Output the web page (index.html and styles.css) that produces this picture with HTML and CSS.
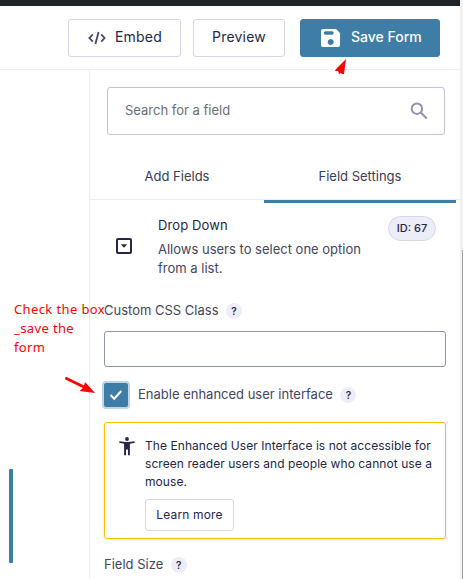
FILE: index.html
```
<!DOCTYPE html>
<html lang="en">
<head>
<meta charset="utf-8">
<title>Form Editor</title>
<link rel="stylesheet" href="styles.css">
</head>
<body>
<div class="app">
  <div class="adminbar"></div>
  <header class="toolbar">
    <button class="btn embed"><svg width="18" height="14" viewBox="0 0 18 14" fill="none" stroke="#454866" stroke-width="1.8"><path d="M4.8 3.3 1.4 7l3.4 3.7M13.2 3.3 16.6 7l-3.4 3.7M10.6 1 7.400 13"/></svg><span>Embed</span></button>
    <button class="btn preview"><span>Preview</span></button>
    <button class="btn save"><svg width="19" height="18" viewBox="0 0 19 18"><path fill="#fff" fill-rule="evenodd" d="M2 0h13l4 4v12a2 2 0 0 1-2 2H2a2 2 0 0 1-2-2V2a2 2 0 0 1 2-2zM4.500 2.200a1.800 1.800 0 0 0 0 3.600h6.500a1.800 1.800 0 0 0 0-3.600zM9.700 10a3 3 0 1 0 .01 0z"/></svg><span>Save Form</span></button>
  </header>
  <div class="workspace">
    <main class="canvas"><div class="selection"></div></main>
    <aside class="sidebar">
      <div class="search"><span>Search for a field</span><svg width="18" height="18" viewBox="0 0 18 18" fill="none" stroke="#9092b2" stroke-width="2"><circle cx="6.900" cy="6.700" r="5.200"/><path d="m10.700 10.500 6 6"/></svg></div>
      <nav class="tabs"><div class="tab"><span>Add Fields</span></div><div class="tab active"><span>Field Settings</span></div></nav>
      <section class="summary">
        <svg class="type" width="16" height="16" viewBox="0 0 16 16"><rect x="1" y="1" width="14" height="14" rx="1" fill="none" stroke="#242748" stroke-width="2"/><path d="M4.800 6.200h6.400L8 9.700z" fill="#242748"/></svg>
        <div class="about"><h2>Drop Down</h2><p>Allows users to select one option<br>from a list.</p></div>
        <span class="badge">ID: 67</span>
      </section>
      <div class="label css-label"><span>Custom CSS Class</span><i class="help">?</i></div>
      <div class="input"></div>
      <div class="label check-row"><div class="checkbox"><svg width="14" height="12" viewBox="0 0 14 12" fill="none" stroke="#fff" stroke-width="2"><path d="m1.500 6 3.700 3.700L12.300 2"/></svg></div><span>Enable enhanced user interface</span><i class="help">?</i></div>
      <div class="notice">
        <svg width="16" height="19" viewBox="0 0 16 19" fill="#242748"><circle cx="8" cy="2" r="1.900"/><path d="M.5 4.200C5 5.300 11 5.300 15.500 4.200l.4 1.500-5 1V18.300H9V12.500H7v5.800H5.100V6.700l-5-1z"/></svg>
        <div class="message"><p>The Enhanced User Interface is not accessible for<br>screen reader users and people who cannot use a<br>mouse.</p><button class="learn">Learn more</button></div>
      </div>
      <div class="label size-label"><span>Field Size</span><i class="help">?</i></div>
    </aside>
  </div>
</div>
<div class="scrollbar"><div class="thumb"></div></div>
<div class="note">Check the box<br>_save the<br>form</div>
<svg class="arrow arrow-check" width="32" height="20" viewBox="0 0 32 20"><path d="M2.500 2.500 20 11" stroke="#f00" stroke-width="3" stroke-linecap="round"/><path d="M21 6 31 17 15.500 15l4-3.500z" fill="#f00"/></svg>
<svg class="arrow arrow-save" width="14" height="16" viewBox="0 0 14 16"><path d="M12 0 10 15H8l-1-1-2 1-1-3H1l1-2z" fill="#f00"/></svg>
</body>
</html>
```

FILE: styles.css
```
* { box-sizing: border-box; }
body { margin: 0; height: 579px; overflow: hidden; display: flex; position: relative; background: #fff; color: #242748; font: 13px/20px Inter, "Liberation Sans", sans-serif; }
button { font: inherit; color: inherit; padding: 0; }
svg { flex: none; display: block; }
.app { width: 460px; height: 579px; display: flex; flex-direction: column; overflow: hidden; }
.adminbar { height: 6px; background: #1d2327; flex: none; }
.toolbar { height: 64px; flex: none; display: flex; align-items: flex-start; padding: 13px 0 0 68px; border-bottom: 1px solid #ecedf8; }
.btn { height: 38px; display: flex; align-items: center; border: 1px solid #d5d7e9; border-radius: 3px; background: #fff; font-size: 14px; font-weight: 400; letter-spacing: .2px; }
.btn span { padding-bottom: 2px; }
.embed { width: 113px; padding-left: 19px; gap: 9px; margin-right: 12px; }
.preview { width: 92px; padding-left: 18px; margin-right: 15px; }
.save { width: 140px; padding-left: 20px; gap: 11px; background: #3e7da6; border-color: #3e7da6; color: #fff; font-weight: 500; letter-spacing: 0; }
.workspace { display: flex; flex: 1; min-height: 0; }
.canvas { width: 89px; padding: 399px 0 0 9px; flex: none; }
.selection { width: 4px; height: 94px; border-radius: 1px; background: #3e7da6; }
.sidebar { width: 371px; border-left: 1px solid #ecedf8; overflow: hidden; }
.search { margin: 17px 0 0 17px; width: 338px; height: 48px; border: 1px solid #c1c3dd; border-radius: 3px; display: flex; align-items: center; justify-content: space-between; padding: 0 16px 0 17px; color: #686e77; }
.search span { padding-bottom: 2px; }
.tabs { height: 65px; display: flex; border-bottom: 1px solid #ecedf8; }
.tab { width: 174px; padding: 31px 0 0; text-align: center; color: #373b57; height: 68px; flex: none; }
.tab.active { width: 192px; border-bottom: 3px solid #3e7da6; }
.summary { height: 96px; display: flex; padding: 16px 0 0 26px; }
.type { margin: 22px 26px 0 0; }
.about { width: 230px; margin-top: -1px; }
h2 { margin: 0; font-size: 13px; line-height: 20px; font-weight: 400; letter-spacing: .12px; }
.about p { margin: 5px 0 0; line-height: 19px; color: #424560; }
.badge { width: 48px; height: 25px; border: 1px solid #d5d7e9; border-radius: 13px; background: #ecedf8; text-align: center; line-height: 23px; font-size: 11px; font-weight: 500; }
.label { display: flex; align-items: center; margin-left: 14px; height: 20px; color: #424560; }
.label span { padding-bottom: 2px; }
.help { width: 16px; height: 16px; border-radius: 50%; background: #ecedf8; text-align: center; font: 600 10px/16px Inter, sans-serif; color: #242748; margin-left: 7.500px; }
.css-label { margin-top: 5px; }
.input { margin: 10px 0 0 14px; width: 342px; height: 36px; border: 1px solid #9092b2; border-radius: 3px; }
.check-row { height: 24px; margin-top: 16px; }
.checkbox { width: 24px; height: 24px; margin-right: 10px; border-radius: 2px; background: #3e7da6; box-shadow: 0 0 0 2px #bdd6e9; display: grid; place-items: center; }
.notice { margin: 15px 0 0 14px; width: 342px; height: 117px; border: 1px solid #ffbe03; border-radius: 3px; box-shadow: 0 1px 3px rgba(36,39,72,.13); display: flex; padding: 14px 0 0 14px; }
.message { margin-left: 10px; font-size: 12px; line-height: 18px; letter-spacing: .06px; white-space: nowrap; }
.message p { margin: 0; }
.learn { width: 89px; height: 32px; margin-top: 8px; border: 1px solid #d5d7e9; border-radius: 3px; background: #fff; font-weight: 400; letter-spacing: .15px; display: block; }
.size-label { margin-top: 16px; }
.scrollbar { width: 3px; background: #f1f1f1; padding: 250px 0 0 2px; }
.thumb { height: 329px; background: #a1a1a1; }
.note { position: absolute; left: 14px; top: 300px; color: #f00; font: 13px/19px "Noto Sans", sans-serif; letter-spacing: .38px; white-space: nowrap; }
.arrow { position: absolute; }
.arrow-check { left: 64px; top: 376px; }
.arrow-save { left: 333.500px; top: 59px; }
```
